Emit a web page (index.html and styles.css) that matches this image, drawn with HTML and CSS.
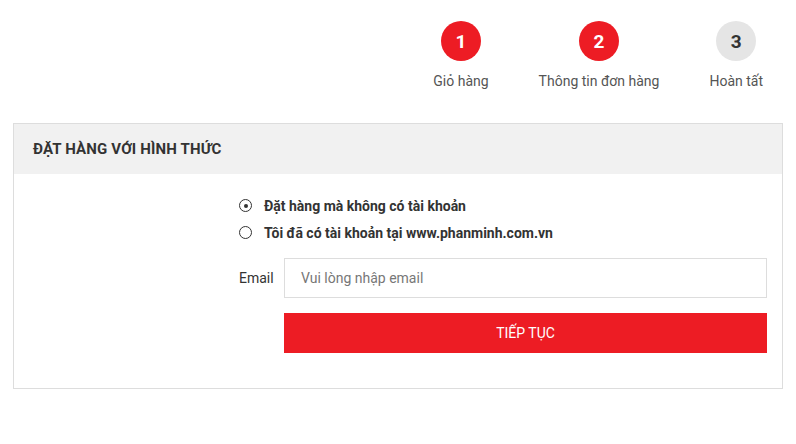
FILE: index.html
```html
<!DOCTYPE html>
<html lang="vi">
<head>
<meta charset="utf-8">
<title>Đặt hàng</title>
<link rel="stylesheet" href="styles.css">
</head>
<body>
<div class="page">
  <div class="steps">
    <div class="step">
      <span class="num active">1</span>
      <span class="label">Giỏ hàng</span>
    </div>
    <div class="step">
      <span class="num active">2</span>
      <span class="label">Thông tin đơn hàng</span>
    </div>
    <div class="step">
      <span class="num">3</span>
      <span class="label">Hoàn tất</span>
    </div>
  </div>

  <div class="box">
    <div class="box-head">ĐẶT HÀNG VỚI HÌNH THỨC</div>
    <div class="box-body">
      <div class="options">
        <label class="opt"><span class="radio checked"></span>Đặt hàng mà không có tài khoản</label>
        <label class="opt"><span class="radio"></span>Tôi đã có tài khoản tại www.phanminh.com.vn</label>
      </div>
      <div class="field">
        <span class="field-label">Email</span>
        <div class="field-main">
          <div class="input">Vui lòng nhập email</div>
          <div class="btn">TIẾP TỤC</div>
        </div>
      </div>
    </div>
  </div>
</div>
</body>
</html>
```

FILE: styles.css
```css
* { box-sizing: border-box; }
html, body { margin: 0; padding: 0; background: #fff; }
body {
  font-family: Roboto, "Liberation Sans", Arial, sans-serif;
  color: #333;
  font-size: 14px;
}
.page { padding: 21px 13px 0 13px; }

.steps {
  display: flex;
  justify-content: flex-end;
  gap: 50px;
  padding-right: 20px;
}
.step {
  display: flex;
  flex-direction: column;
  align-items: center;
}
.num {
  width: 40px;
  height: 40px;
  border-radius: 50%;
  background: #e5e5e5;
  color: #333;
  font-weight: 700;
  font-size: 19px;
  display: flex;
  align-items: center;
  justify-content: center;
}
.num.active { background: #ed1c24; color: #fff; }
.label {
  margin-top: 10px;
  font-size: 14px;
  line-height: 20px;
  color: #555;
}

.box {
  margin-top: 32px;
  border: 1px solid #ddd;
}
.box-head {
  background: #f1f1f1;
  height: 50px;
  display: flex;
  align-items: center;
  padding-left: 19px;
  font-weight: 700;
  font-size: 15px;
  letter-spacing: 0.15px;
  color: #333;
}
.box-body {
  padding: 18px 15px 35px 225px;
}
.options { display: flex; flex-direction: column; }
.opt {
  display: flex;
  align-items: center;
  height: 27px;
  font-weight: 700;
  font-size: 14px;
  color: #333;
}
.radio {
  width: 13px;
  height: 13px;
  border: 1.5px solid #333;
  border-radius: 50%;
  margin-right: 12px;
  position: relative;
  flex: none;
}
.radio.checked::after {
  content: "";
  position: absolute;
  left: 50%;
  top: 50%;
  width: 4px;
  height: 4px;
  margin: -2px 0 0 -2px;
  border-radius: 50%;
  background: #333;
}
.field {
  display: flex;
  margin-top: 12px;
}
.field-label {
  width: 45px;
  flex: none;
  height: 40px;
  display: flex;
  align-items: center;
  font-size: 14px;
  color: #333;
}
.field-main { flex: 1; display: flex; flex-direction: column; gap: 15px; }
.input {
  height: 40px;
  border: 1px solid #ddd;
  display: flex;
  align-items: center;
  padding-left: 16px;
  color: #777;
  font-size: 14px;
}
.btn {
  height: 40px;
  background: #ed1c24;
  color: #fff;
  display: flex;
  align-items: center;
  justify-content: center;
  font-size: 14px;
}
```
